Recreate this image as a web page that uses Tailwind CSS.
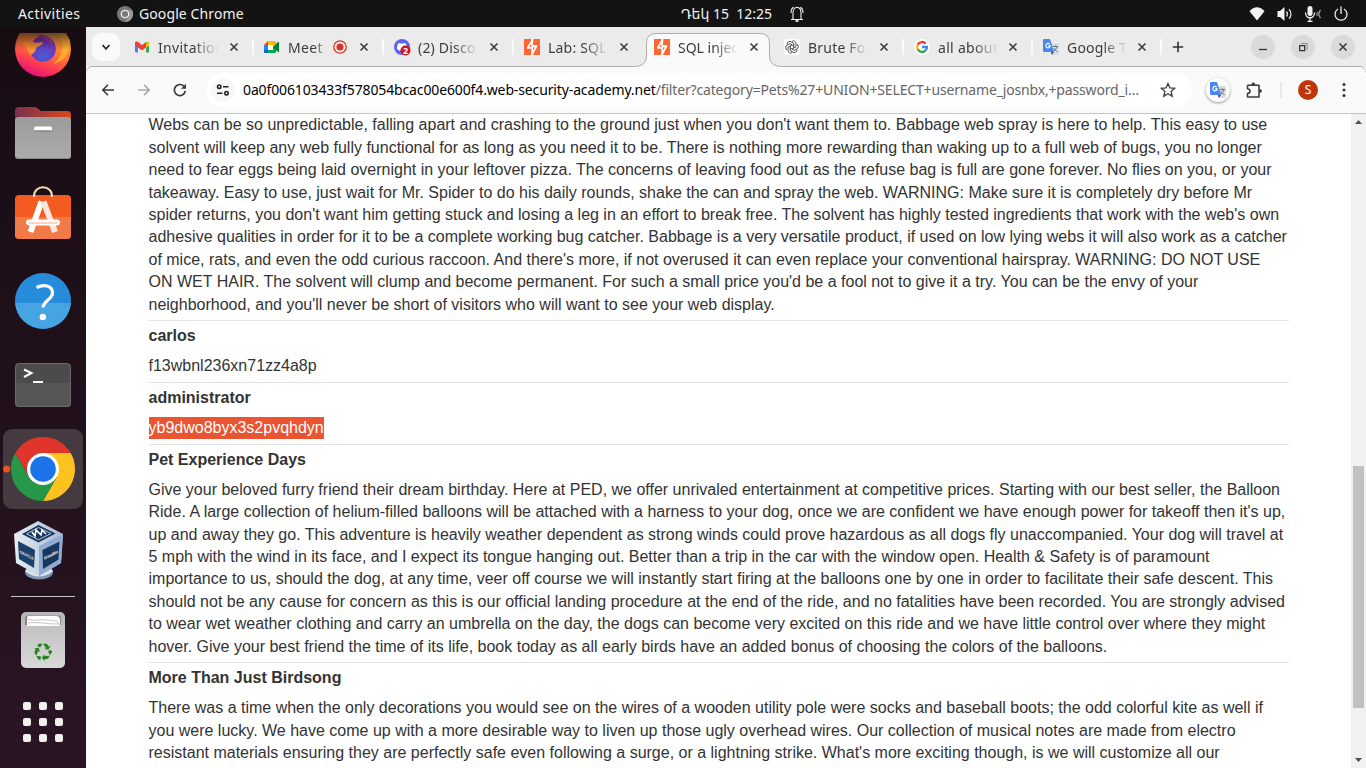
<!DOCTYPE html>
<html lang="en">
<head>
<meta charset="utf-8">
<title>SQL injection</title>
<script src="https://cdn.jsdelivr.net/npm/@tailwindcss/browser@4"></script>
</head>
<body class="w-[1366px] h-[768px] overflow-hidden flex flex-col bg-white font-['Noto_Sans','DejaVu_Sans',sans-serif]">
<svg class="hidden">
  <symbol id="x" viewBox="0 0 10 10"><path d="M1.500 1.500l7 7M8.500 1.500l-7 7" stroke="#3c3c3c" stroke-width="1.600" fill="none"/></symbol>
  <symbol id="burp" viewBox="0 0 16 16"><path fill="#ff6633" d="M0 0h16v16H0z"/><path fill="#fff" d="M7.300 0h2.200L8.800 6.200h4.400v1.600L9 15.600l-.4.400H7l.6-6.200H3V8.200L7.300 1z"/><path fill="#ff6633" d="M7.200 4.500L5.400 7.700l2 .3zM9 8.300l1.800.3L9 11.800z"/></symbol>
  <symbol id="tr" viewBox="0 0 16 16"><path fill="#dadce0" d="M6 4h9a1 1 0 0 1 1 1v10a1 1 0 0 1-1 1H9z"/><path d="M9.500 7.500h5.500M12.300 6.300v1.200M14 7.500c-.5 2.500-2 4-4 5M10.800 9c.8 1.800 2 3 3.700 3.800" stroke="#607d8b" fill="none"/><path fill="#3949ab" d="M8 13h3l-2.200 3z"/><path fill="#4a86f0" d="M1 0h6l4 13H1a1 1 0 0 1-1-1V1a1 1 0 0 1 1-1z"/><path d="M6.700 5.200A2.200 2.200 0 1 0 7.200 6.900H5.200" stroke="#fff" stroke-width="1.100" fill="none"/></symbol>
</svg>

<header class="h-[27px] shrink-0 bg-[#131313] text-[#f2f2f2] text-[14px] leading-[27px] flex items-center relative">
  <span class="ml-[18px] w-[99px] tracking-[0.400px]">Activities</span>
  <svg class="w-4 h-4" viewBox="0 0 16 16"><circle cx="8" cy="8" r="8" fill="#777"/><path d="M8 4h7A8 8 0 0 1 8 16l4-6z" fill="#999"/><circle cx="8" cy="8" r="3.700" fill="#777" stroke="#eee" stroke-width="1.300"/></svg>
  <span class="ml-[6px] w-[542px] tracking-[0.100px]">Google Chrome</span>
  <span class="w-[109px] whitespace-pre">Դեկ 15  12:25</span>
  <svg class="w-[14px] h-4" viewBox="0 0 14 16" fill="none" stroke="#eee" stroke-width="1.100"><path d="M1 13.500h12M3 13V7c0-7.500 8-7.500 8 0v6M1 7c0-3 .8-4.800 2.500-6M13 7c0-3-.8-4.800-2.500-6"/><path d="M5.500 15h3" stroke-width="1.800"/></svg>
  <svg class="ml-[445px] w-4 h-4" viewBox="0 0 16 16"><path fill="#f2f2f2" d="M8 14.500L.5 5.300C5-.2 11-.2 15.500 5.300z"/></svg>
  <svg class="ml-[12px] w-4 h-4" viewBox="0 0 16 16" fill="none"><path fill="#f2f2f2" d="M.5 5H3l4.500-4v14L3 11H.5z"/><path d="M9.500 5.500c1.200 1.500 1.200 3.500 0 5M12 3.200c2.600 2.700 2.600 6.900 0 9.600" stroke="#ddd" stroke-width="1.300"/></svg>
  <svg class="ml-[11px] w-[18px] h-4" viewBox="0 0 18 16" fill="none"><rect x="3.500" y="0" width="5" height="10" rx="2.500" fill="#f2f2f2"/><path d="M1.500 6.500c0 7 9 7 9 0M6 12v3.500M3.500 15.500h5" stroke="#f2f2f2" stroke-width="1.300"/><path d="M13.500 6c-.8 1.200-.8 2.800 0 4M16.500 4c-2 2.500-2 5.500 0 8" stroke="#999" stroke-width="1.300"/></svg>
  <svg class="ml-[11px] w-4 h-4" viewBox="0 0 16 16" fill="none" stroke="#f2f2f2" stroke-width="1.300"><path d="M5 3a6 6 0 1 0 6 0M8 .5V8"/></svg>
</header>

<div class="flex flex-1 min-h-0">
<aside class="w-[86px] shrink-0 bg-linear-to-b from-[#180c13] to-[#2a1524] flex flex-col items-center relative">
  <svg class="mt-[-7px] w-[58px] h-[58px] shrink-0" viewBox="14 20 58 58">
    <defs>
      <linearGradient id="ff" x1=".7" y1="0" x2=".3" y2="1"><stop offset="0" stop-color="#e8b838"/><stop offset=".5" stop-color="#ff7a30"/><stop offset=".75" stop-color="#ff3d50"/><stop offset="1" stop-color="#e00b82"/></linearGradient>
      <linearGradient id="fd" x1="0" y1="0" x2="0" y2="1"><stop offset="0" stop-color="#180c13" stop-opacity=".75"/><stop offset="1" stop-color="#180c13" stop-opacity="0"/></linearGradient>
      <radialGradient id="fp" cx=".5" cy=".8" r=".8"><stop offset="0" stop-color="#4a5bd0"/><stop offset="1" stop-color="#7b25b5"/></radialGradient>
      <clipPath id="fc"><path d="M14 33h58v46H14z"/></clipPath>
    </defs>
    <g clip-path="url(#fc)"><circle cx="43" cy="49" r="28" fill="url(#ff)"/><path d="M56 30c10 12 8 26-3 34 13-3 18-13 17-24-3-5-8-9-14-10z" fill="#ffb52e" opacity=".8"/><circle cx="43" cy="49" r="12.800" fill="url(#fp)"/><path d="M23 43c5-3 9-3 12 0l8-1c0 3-5 4-7 6 0 4-3 6-6 7-2-5-5-9-7-12z" fill="#f98e32"/><path d="M37 35c6-2 12 1 18 8l-3-1 2 6c-5-7-9-9-17-13z" fill="#9a3fa5"/><path d="M14 30h58v20H14z" fill="url(#fd)"/></g>
  </svg>
  <svg class="mt-[28px] w-[58px] h-[54px] shrink-0" viewBox="14 106 58 54">
    <defs><linearGradient id="fo"><stop stop-color="#78304f"/><stop offset="1" stop-color="#d94a1e"/></linearGradient><linearGradient id="fg" x1="0" y1="0" x2="0" y2="1"><stop stop-color="#9c9c9c"/><stop offset="1" stop-color="#ababab"/></linearGradient></defs>
    <path d="M15 125v-14q0-4 4-4h15q2 0 3 1l4 3h26q4 0 4 4v12z" fill="url(#fo)"/><rect x="15" y="117" width="56" height="42" rx="3.500" fill="url(#fg)"/><path d="M16 157.500q1 1 3 1h48q3 0 3.500-2" stroke="#888" fill="none"/><rect x="34" y="126.500" width="18" height="4" rx="1.500" fill="#fff"/><path d="M35 131h16" stroke="#777"/>
  </svg>
  <svg class="mt-[24px] w-[58px] h-[56px] shrink-0" viewBox="14 184 58 56">
    <rect x="15" y="195" width="56" height="44" rx="4" fill="#f45b21"/><path d="M15 217h56v18q0 4-4 4H19q-4 0-4-4z" fill="#f27a46"/><path d="M34 197c-1-13 19-13 18 0" fill="none" stroke="#f6dcae" stroke-width="2"/><path d="M41.500 201.500L30.500 232" stroke="#fff" stroke-width="6"/><path d="M43.500 201.500L55 232" stroke="#ffe6dc" stroke-width="6"/><path d="M29 222.500h28" stroke="#fff" stroke-width="6" stroke-linecap="round"/><path d="M29.500 223h27" stroke="#ffd3c4" stroke-width="2" stroke-linecap="round"/>
  </svg>
  <svg class="mt-[32px] w-[58px] h-[58px] shrink-0" viewBox="14 272 58 58"><circle cx="43" cy="301" r="28" fill="#278bdb"/><path d="M15.100 303A28 28 0 0 0 70.900 303z" fill="#46a4e3"/><path d="M36.500 287.500c7-3.500 16-2.500 16 5.500 0 6-9 8-9.500 14.500" fill="none" stroke="#fff" stroke-width="3.200"/><circle cx="42.800" cy="317" r="3.200" fill="#fff"/></svg>
  <svg class="mt-[32px] w-[58px] h-[46px] shrink-0" viewBox="14 362 58 46"><rect x="15" y="363" width="56" height="44" rx="4" fill="#4b4b4b"/><path d="M15 383h56v20q0 4-4 4H19q-4 0-4-4z" fill="#565656"/><rect x="15.500" y="363.500" width="55" height="43" rx="4" fill="none" stroke="#696969"/><path d="M24 369.500l7.500 3.500-7.500 4" fill="none" stroke="#fff" stroke-width="2"/><path d="M33 382h10" stroke="#fff" stroke-width="2"/></svg>
  <svg class="mt-[21px] w-[86px] h-[80px] shrink-0" viewBox="0 429 86 80"><rect x="3" y="429" width="80" height="80" rx="9" fill="#463a41"/><circle cx="6.700" cy="469" r="3.600" fill="#e95420"/>
    <path d="M43 469L15.300 453A32 32 0 0 1 70.700 453z" fill="#e0352b"/><path d="M43 453h27.700A32 32 0 0 1 43 501l13.900-24z" fill="#fcc31e"/><path d="M15.300 453A32 32 0 0 0 43 501l13.900-24H29.100z" fill="#279847"/><path d="M15.300 453h50L43 475l-13.900 2z" fill="#e0352b"/><path d="M43 453h27.700v10L56.900 477z" fill="#fcc31e"/><circle cx="43" cy="469" r="16" fill="#fff"/><circle cx="43" cy="469" r="12.800" fill="#1a73e8"/></svg>
  <svg class="mt-[11px] w-[58px] h-[62px] shrink-0" viewBox="14 520 58 62">
    <defs><linearGradient id="vb"><stop stop-color="#e8edf4"/><stop offset="1" stop-color="#a7bad5"/></linearGradient></defs>
    <ellipse cx="39" cy="572" rx="14" ry="7.500" fill="#8195b2"/><path d="M26 570q13 10 26 0" stroke="#dbe4f0" stroke-width="3" fill="none"/><path d="M14 534l24-13 25 13-2 29-22 13-23-13z" fill="url(#vb)"/><path d="M39 546l24-12-2 29-22 13z" fill="#91acd2"/><path d="M22 534l16.500-9 17 8.500-17 9z" fill="#17375c"/><path d="M26.500 533.800l12-6.300 12.500 6-12.500 6.300z" fill="none" stroke="#b9cce0"/><path d="M32 532l3 4 1-6 5 5 1-5 4 4" stroke="#fff" stroke-width="1.600" fill="none"/><path d="M18 541l17 9-1 18-15-9z" fill="#1c4169"/><path d="M42.500 550l17-8.500-1 18-15.500 9.500z" fill="#17375c"/>
    <text transform="matrix(1 .5 0 1 19.500 553)" font-size="4" font-weight="bold" fill="#ccd8e8" textLength="14">ORACLE</text><text transform="matrix(1 -.5 0 1 44 560)" font-size="4.500" font-weight="bold" fill="#fff" textLength="14" lengthAdjust="spacingAndGlyphs">VirtualBox</text>
  </svg>
  <div class="mt-[14px] w-[64px] h-px bg-[#c8c4c6] shrink-0"></div>
  <svg class="mt-[14px] w-[46px] h-[58px] shrink-0" viewBox="20 611 46 58">
    <defs><linearGradient id="tg" x1="0" y1="0" x2="0" y2="1"><stop stop-color="#b5b5b5"/><stop offset=".3" stop-color="#c4c4c4"/><stop offset="1" stop-color="#d8d8d8"/></linearGradient></defs>
    <rect x="21" y="612" width="44" height="56" rx="5" fill="url(#tg)"/><path d="M25 625v-7q0-2.500 2.500-2.500h31q2.500 0 2.500 2.500v7z" fill="#888"/><path d="M27 626v-8q0-2 2-2h27q3 0 4 3v7z" fill="#fff"/><path d="M27 619q5 2 11 1t18 1q3 1 3 4M28 623q7-1 14 0t16 1" stroke="#c7c7c7" fill="none"/>
    <g transform="translate(43 651.700) scale(.93)" fill="#27831f"><path id="rc" d="M-5-8.500H-.5L-3-4.500-6-6.200zM0-8.500H4l2.200 3L8-6.500 6 -2 1.500-2.800 3.200-3.800z"/><use href="#rc" transform="rotate(120)"/><use href="#rc" transform="rotate(240)"/></g>
  </svg>
  <svg class="mt-[33px] w-[40px] h-[40px] shrink-0" viewBox="0 0 40 40" fill="#f0f0f0"><rect width="8" height="8" rx="2"/><rect x="16" width="8" height="8" rx="2"/><rect x="32" width="8" height="8" rx="2"/><rect y="16" width="8" height="8" rx="2"/><rect x="16" y="16" width="8" height="8" rx="2"/><rect x="32" y="16" width="8" height="8" rx="2"/><rect y="32" width="8" height="8" rx="2"/><rect x="16" y="32" width="8" height="8" rx="2"/><rect x="32" y="32" width="8" height="8" rx="2"/></svg>
</aside>

<main class="flex-1 min-w-0 flex flex-col">
  <div class="h-[40px] shrink-0 bg-[#ebebeb] flex items-center text-[14px] text-[#3c3c3c] relative">
    <svg class="absolute left-0 top-0 w-[1280px] h-[46px]" viewBox="86 27 1280 46" fill="none"><path d="M86.500 75V72.500Q87 66.500 93 66.500H634Q646.500 66.500 646.500 56V43Q646.500 33.500 656 33.500H760Q769.500 33.500 769.500 43V56Q769.500 66.500 782 66.500H1359Q1365 66.500 1365.500 72.500V75" fill="#fafafa" stroke="#adadad"/></svg>
    <div class="ml-[6px] w-7 h-7 rounded-[9px] bg-[#fafafa] flex items-center justify-center"><svg class="w-[10px] h-[10px]" viewBox="0 0 10 10"><path d="M1.500 3l3.500 3.800L8.500 3" fill="none" stroke="#2e2e2e" stroke-width="1.800"/></svg></div>

    <div class="ml-[6px] w-[130px] h-4 flex items-center relative">
      <svg class="ml-2 w-4 h-4" viewBox="0 0 16 16"><path d="M1 3h3v10.500H2a1 1 0 0 1-1-1z" fill="#4285f4"/><path d="M12 3h3v9.500a1 1 0 0 1-1 1h-2z" fill="#34a853"/><path d="M12 4l3-1.500v4l-3 2.500z" fill="#fbbc04"/><path d="M1 4.500C1 2.500 3 2 4 3l4 3 4-3v5.500L8 11.500 4 8.500 1 6.500z" fill="#ea4335"/></svg>
      <span class="ml-2 w-[60px] overflow-hidden whitespace-nowrap tracking-[0.300px] mask-r-from-60% mask-r-to-100%">Invitation</span><svg class="ml-[11px] w-[10px] h-[10px]"><use href="#x"/></svg><i class="absolute left-[126px] top-0 w-[2px] h-4 bg-[#fafafa]"></i></div>
    <div class="w-[130px] h-4 flex items-center relative">
      <svg class="ml-2 w-4 h-4" viewBox="0 0 16 16"><path d="M0 6l4-4v4z" fill="#ea4335"/><path d="M0 6h4v5H0z" fill="#2684fc"/><path d="M0 11h4v3H1a1 1 0 0 1-1-1z" fill="#0066da"/><path d="M4 2h7a1 1 0 0 1 1 1v4l-3 1V6H4z" fill="#ffba00"/><path d="M4 11h5V8l3-1v6a1 1 0 0 1-1 1H4z" fill="#00ac47"/><path d="M9 8l5-5q1-.5 1 .5v9q0 1-1 .5z" fill="#00832d"/><path d="M4 6h5v5H4z" fill="#fff"/></svg>
      <span class="ml-2 w-[36px] overflow-hidden whitespace-nowrap tracking-[0.300px] mask-r-from-70% mask-r-to-120%">Meet</span>
      <svg class="ml-[9px] w-[14px] h-[14px]" viewBox="0 0 14 14"><circle cx="7" cy="7" r="6.200" fill="none" stroke="#d93025" stroke-width="1.300"/><circle cx="7" cy="7" r="3.500" fill="#d93025"/></svg>
      <svg class="ml-[12px] w-[10px] h-[10px]"><use href="#x"/></svg><i class="absolute left-[126px] top-0 w-[2px] h-4 bg-[#fafafa]"></i></div>
    <div class="w-[130px] h-4 flex items-center relative">
      <svg class="ml-2 w-4 h-4 overflow-visible" viewBox="0 0 16 16"><circle cx="8" cy="8" r="8" fill="#5865f2"/><path d="M3 10q0-5 2-6l2 .5h2L11 4q2 1 2 6l-3 2-1-1H7l-1 1z" fill="#fff"/><circle cx="11.500" cy="11.500" r="5" fill="#d8111b"/><text x="11.500" y="15" font-size="9" font-weight="bold" text-anchor="middle" fill="#fff">2</text></svg>
      <span class="ml-2 w-[60px] overflow-hidden whitespace-nowrap tracking-[0.200px] mask-r-from-60% mask-r-to-100%">(2) Disco</span><svg class="ml-[11px] w-[10px] h-[10px]"><use href="#x"/></svg><i class="absolute left-[126px] top-0 w-[2px] h-4 bg-[#fafafa]"></i></div>
    <div class="w-[130px] h-4 flex items-center relative">
      <svg class="ml-2 w-4 h-4"><use href="#burp"/></svg>
      <span class="ml-2 w-[60px] overflow-hidden whitespace-nowrap tracking-[0.200px] mask-r-from-60% mask-r-to-100%">Lab: SQL</span><svg class="ml-[11px] w-[10px] h-[10px]"><use href="#x"/></svg></div>
    <div class="w-[130px] h-4 flex items-center relative">
      <svg class="ml-2 w-4 h-4"><use href="#burp"/></svg>
      <span class="ml-2 w-[60px] overflow-hidden whitespace-nowrap mask-r-from-60% mask-r-to-100%">SQL injec</span><svg class="ml-[11px] w-[10px] h-[10px]"><use href="#x"/></svg></div>
    <div class="w-[130px] h-4 flex items-center relative">
      <svg class="ml-2 w-4 h-4" viewBox="0 0 16 16" fill="none" stroke="#222" stroke-width=".75"><rect width="16" height="16" rx="3" fill="#fff" stroke="none"/><path id="gl" d="M8 2.300a2.600 2.600 0 0 1 4 2.300v3.200L8 10"/><use href="#gl" transform="rotate(60 8 8)"/><use href="#gl" transform="rotate(120 8 8)"/><use href="#gl" transform="rotate(180 8 8)"/><use href="#gl" transform="rotate(240 8 8)"/><use href="#gl" transform="rotate(300 8 8)"/></svg>
      <span class="ml-2 w-[60px] overflow-hidden whitespace-nowrap tracking-[0.200px] mask-r-from-60% mask-r-to-100%">Brute Fo</span><svg class="ml-[11px] w-[10px] h-[10px]"><use href="#x"/></svg><i class="absolute left-[126px] top-0 w-[2px] h-4 bg-[#fafafa]"></i></div>
    <div class="w-[129px] h-4 flex items-center relative">
      <svg class="ml-2 w-4 h-4" viewBox="0 0 16 16" fill="none" stroke-width="2.300"><circle cx="8" cy="8" r="8" fill="#fff"/><path d="M3.600 5.700A5 5 0 0 1 11.700 4.600" stroke="#ea4335"/><path d="M3.600 10.300a5 5 0 0 1 0-4.600" stroke="#fbbc05"/><path d="M3.600 10.300a5 5 0 0 0 7.800 1.400" stroke="#34a853"/><path d="M8 8h5a5 5 0 0 1-1.600 3.700" stroke="#4285f4"/></svg>
      <span class="ml-2 w-[60px] overflow-hidden whitespace-nowrap tracking-[0.300px] mask-r-from-60% mask-r-to-100%">all about</span><svg class="ml-[10px] w-[10px] h-[10px]"><use href="#x"/></svg><i class="absolute left-[125px] top-0 w-[2px] h-4 bg-[#fafafa]"></i></div>
    <div class="w-[129px] h-4 flex items-center relative">
      <svg class="ml-2 w-4 h-4"><use href="#tr"/></svg>
      <span class="ml-2 w-[60px] overflow-hidden whitespace-nowrap tracking-[0.200px] mask-r-from-60% mask-r-to-100%">Google T</span><svg class="ml-[10px] w-[10px] h-[10px]"><use href="#x"/></svg><i class="absolute left-[125px] top-0 w-[2px] h-4 bg-[#fafafa]"></i></div>
    <svg class="relative ml-[8px] w-[12px] h-[12px]" viewBox="0 0 12 12"><path d="M6 .8v10.400M.8 6h10.400" stroke="#333" stroke-width="1.600"/></svg>
    <div class="relative ml-[67px] flex gap-[16px]">
      <div class="w-6 h-6 rounded-full bg-[#dadada] flex items-center justify-center"><svg class="w-3 h-3" viewBox="0 0 12 12"><path d="M2 8.500h8" stroke="#333" stroke-width="1.300"/></svg></div>
      <div class="w-6 h-6 rounded-full bg-[#dadada] flex items-center justify-center"><svg class="w-3 h-3" viewBox="0 0 12 12" fill="none"><path d="M2.700 4.700h5v5h-5z" stroke="#333" stroke-width="1.300"/><path d="M4 2.500h6V9" stroke="#888"/></svg></div>
      <div class="w-6 h-6 rounded-full bg-[#dadada] flex items-center justify-center"><svg class="w-[10px] h-[10px]"><use href="#x"/></svg></div>
    </div>
  </div>

  <div class="h-[47px] shrink-0 bg-[#fafafa] border-b border-[#c6c6c6] flex items-center relative z-0 rounded-t-[7px]">
    <svg class="ml-[15px] w-[14px] h-[14px]" viewBox="0 0 14 14" fill="none" stroke="#3c3c3c" stroke-width="1.600"><path d="M13 7H2M7 1.800L1.800 7 7 12.200"/></svg>
    <svg class="ml-[22px] w-[14px] h-[14px]" viewBox="0 0 14 14" fill="none" stroke="#a8a8a8" stroke-width="1.600"><path d="M1 7h11M7 1.800L12.200 7 7 12.200"/></svg>
    <svg class="ml-[22px] w-[14px] h-[14px]" viewBox="0 0 14 14" fill="none"><path d="M12.300 8A5.500 5.500 0 1 1 11.500 4" stroke="#3c3c3c" stroke-width="1.700"/><path d="M13 .8v5H8z" fill="#3c3c3c"/></svg>
    <div class="ml-[19px] w-[986px] h-[34px] rounded-full bg-white flex items-center">
      <div class="ml-[5px] w-6 h-6 rounded-full bg-[#f7f7f7] flex items-center justify-center"><svg class="w-[14px] h-[12px]" viewBox="0 0 14 12" fill="none" stroke="#222" stroke-width="1.600"><circle cx="3.200" cy="2.700" r="1.700"/><path d="M7 2.700h5.500M1 9.200h5.500"/><circle cx="10.500" cy="9.200" r="1.700"/></svg></div>
      <div class="ml-[8px] w-[917px] text-[14px] leading-[20px] whitespace-nowrap text-[#666]"><span class="text-black tracking-[-0.130px]">0a0f006103433f578054bcac00e600f4.web-security-academy.net</span><span class="tracking-[-0.160px]">/filter?category=Pets%27+UNION+SELECT+username_josnbx,+password_i…</span></div>
      <svg class="w-4 h-4" viewBox="0 0 16 16"><path d="M8 1.500l1.900 4.400 4.800.4-3.600 3.200 1.100 4.700L8 11.700l-4.200 2.500 1.100-4.700L1.300 6.300l4.800-.4z" fill="none" stroke="#444" stroke-width="1.400"/></svg>
    </div>
    <div class="ml-[14px] w-6 h-6 rounded-full bg-white shadow-[0_1px_3px_rgba(0,0,0,.4)] flex items-center justify-center"><svg class="w-4 h-4"><use href="#tr"/></svg></div>
    <svg class="ml-[15px] w-[18px] h-[18px]" viewBox="0 0 18 18"><path d="M2.500 4.200H14V8.500M14 11v5H2.500v-3.500q2.500-.3 2.500-2.300t-2.500-2.400V4.200M14 8v4" fill="none" stroke="#3c3c3c" stroke-width="1.600" stroke-linejoin="round"/><path d="M6.500 4V3.200a1.800 1.800 0 0 1 3.600 0V4zM14.500 8.200h.7a1.800 1.800 0 0 1 0 3.600h-.7z" fill="#3c3c3c"/></svg>
    <i class="ml-[17px] w-[2px] h-4 bg-[#e8e8e8]"></i>
    <div class="ml-[16px] w-5 h-5 rounded-full bg-[#bf360c] text-white text-[12px] leading-[20px] text-center">S</div>
    <svg class="ml-[24px] w-1 h-4 overflow-visible" viewBox="0 0 4 16" fill="#333"><circle cx="2" cy="2.500" r="1.500"/><circle cx="2" cy="8" r="1.500"/><circle cx="2" cy="13.500" r="1.500"/></svg>
  </div>

  <div class="flex-1 min-h-0 flex bg-white">
    <div class="flex-1 overflow-hidden pl-[62.500px] pr-[62px] text-[16px] leading-[22.400px] text-[#333] whitespace-nowrap font-['Liberation_Sans',Arial,sans-serif]">
      <p class="h-[206px] pt-[0.400px]">Webs can be so unpredictable, falling apart and crashing to the ground just when you don't want them to. Babbage web spray is here to help. This easy to use<br>solvent will keep any web fully functional for as long as you need it to be. There is nothing more rewarding than waking up to a full web of bugs, you no longer<br>need to fear eggs being laid overnight in your leftover pizza. The concerns of leaving food out as the refuse bag is full are gone forever. No flies on you, or your<br>takeaway. Easy to use, just wait for Mr. Spider to do his daily rounds, shake the can and spray the web. WARNING: Make sure it is completely dry before Mr<br>spider returns, you don't want him getting stuck and losing a leg in an effort to break free. The solvent has highly tested ingredients that work with the web's own<br>adhesive qualities in order for it to be a complete working bug catcher. Babbage is a very versatile product, if used on low lying webs it will also work as a catcher<br>of mice, rats, and even the odd curious raccoon. And there's more, if not overused it can even replace your conventional hairspray. WARNING: DO NOT USE<br>ON WET HAIR. The solvent will clump and become permanent. For such a small price you'd be a fool not to give it a try. You can be the envy of your<br>neighborhood, and you'll never be short of visitors who will want to see your web display.</p>
      <section class="h-[62px] border-t border-[#e3e3e3] pt-[4px]"><h2 class="font-bold">carlos</h2><p class="mt-[7.600px]">f13wbnl236xn71zz4a8p</p></section>
      <section class="h-[62px] border-t border-[#e3e3e3] pt-[4px]"><h2 class="font-bold">administrator</h2><p class="mt-[7.600px]"><span class="inline-block h-[22px] bg-[#e95433] text-white">yb9dwo8byx3s2pvqhdyn</span></p></section>
      <section class="h-[218px] border-t border-[#e3e3e3] pt-[4px]"><h2 class="font-bold">Pet Experience Days</h2><p class="mt-[7.400px]">Give your beloved furry friend their dream birthday. Here at PED, we offer unrivaled entertainment at competitive prices. Starting with our best seller, the Balloon<br>Ride. A large collection of helium-filled balloons will be attached with a harness to your dog, once we are confident we have enough power for takeoff then it's up,<br>up and away they go. This adventure is heavily weather dependent as strong winds could prove hazardous as all dogs fly unaccompanied. Your dog will travel at<br>5 mph with the wind in its face, and I expect its tongue hanging out. Better than a trip in the car with the window open. Health &amp; Safety is of paramount<br>importance to us, should the dog, at any time, veer off course we will instantly start firing at the balloons one by one in order to facilitate their safe descent. This<br>should not be any cause for concern as this is our official landing procedure at the end of the ride, and no fatalities have been recorded. You are strongly advised<br>to wear wet weather clothing and carry an umbrella on the day, the dogs can become very excited on this ride and we have little control over where they might<br>hover. Give your best friend the time of its life, book today as all early birds have an added bonus of choosing the colors of the balloons.</p></section>
      <section class="h-[120px] border-t border-[#e3e3e3] pt-[4px]"><h2 class="font-bold">More Than Just Birdsong</h2><p class="mt-[7.800px]">There was a time when the only decorations you would see on the wires of a wooden utility pole were socks and baseball boots; the odd colorful kite as well if<br>you were lucky. We have come up with a more desirable way to liven up those ugly overhead wires. Our collection of musical notes are made from electro<br>resistant materials ensuring they are perfectly safe even following a surge, or a lightning strike. What's more exciting though, is we will customize all our</p></section>
    </div>
    <div class="w-[15px] shrink-0 bg-[#f1f1f1] flex flex-col items-center">
      <svg class="mt-[6px] w-[7px] h-[4px]" viewBox="0 0 7 4"><path d="M0 4L3.500 0 7 4z" fill="#505050"/></svg>
      <div class="mt-[342px] w-[11px] h-[242px] bg-[#c1c1c1]"></div>
      <svg class="mt-[50px] w-[7px] h-[4px]" viewBox="0 0 7 4"><path d="M0 0l3.500 4L7 0z" fill="#505050"/></svg>
    </div>
  </div>
</main>
</div>
</body>
</html>
